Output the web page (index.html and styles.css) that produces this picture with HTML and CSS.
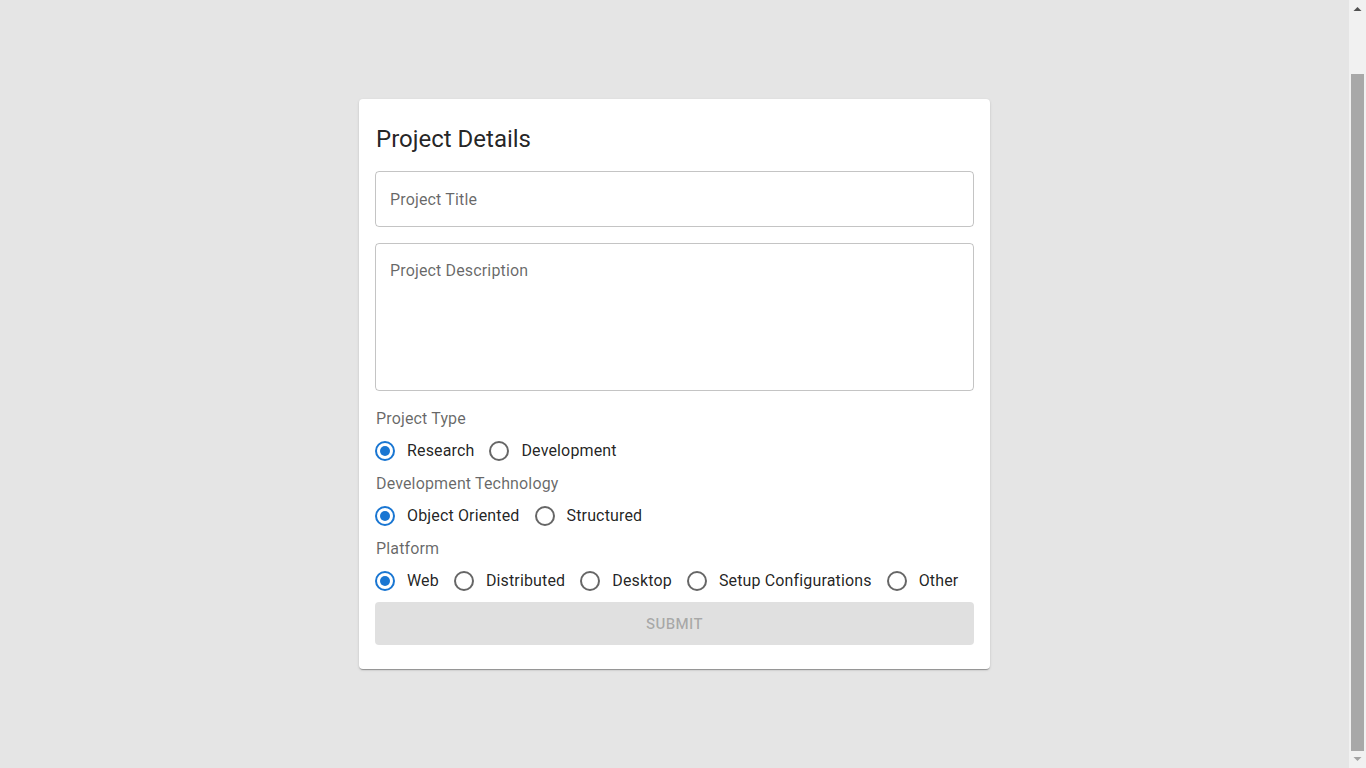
FILE: index.html
```html
<!DOCTYPE html>
<html lang="en">
<head>
<meta charset="utf-8">
<title>Project Details</title>
<link rel="stylesheet" href="styles.css">
</head>
<body>
<main class="page">
  <form class="card">
    <h2 class="title">Project Details</h2>
    <div class="field field-single">
      <span class="field-label">Project Title</span>
    </div>
    <div class="field field-multi">
      <span class="field-label">Project Description</span>
    </div>

    <div class="group">
      <div class="group-label">Project Type</div>
      <div class="radio-row">
        <label class="radio-item"><span class="radio checked"><svg viewBox="0 0 24 24"><circle cx="12" cy="12" r="9" class="ring"/><circle cx="12" cy="12" r="5" class="dot"/></svg></span><span class="radio-text">Research</span></label>
        <label class="radio-item"><span class="radio"><svg viewBox="0 0 24 24"><circle cx="12" cy="12" r="9" class="ring"/></svg></span><span class="radio-text">Development</span></label>
      </div>
    </div>

    <div class="group">
      <div class="group-label">Development Technology</div>
      <div class="radio-row">
        <label class="radio-item"><span class="radio checked"><svg viewBox="0 0 24 24"><circle cx="12" cy="12" r="9" class="ring"/><circle cx="12" cy="12" r="5" class="dot"/></svg></span><span class="radio-text">Object Oriented</span></label>
        <label class="radio-item"><span class="radio"><svg viewBox="0 0 24 24"><circle cx="12" cy="12" r="9" class="ring"/></svg></span><span class="radio-text">Structured</span></label>
      </div>
    </div>

    <div class="group">
      <div class="group-label">Platform</div>
      <div class="radio-row">
        <label class="radio-item"><span class="radio checked"><svg viewBox="0 0 24 24"><circle cx="12" cy="12" r="9" class="ring"/><circle cx="12" cy="12" r="5" class="dot"/></svg></span><span class="radio-text">Web</span></label>
        <label class="radio-item"><span class="radio"><svg viewBox="0 0 24 24"><circle cx="12" cy="12" r="9" class="ring"/></svg></span><span class="radio-text">Distributed</span></label>
        <label class="radio-item"><span class="radio"><svg viewBox="0 0 24 24"><circle cx="12" cy="12" r="9" class="ring"/></svg></span><span class="radio-text">Desktop</span></label>
        <label class="radio-item"><span class="radio"><svg viewBox="0 0 24 24"><circle cx="12" cy="12" r="9" class="ring"/></svg></span><span class="radio-text">Setup Configurations</span></label>
        <label class="radio-item"><span class="radio"><svg viewBox="0 0 24 24"><circle cx="12" cy="12" r="9" class="ring"/></svg></span><span class="radio-text">Other</span></label>
      </div>
    </div>

    <div class="submit">SUBMIT</div>
  </form>
</main>
<aside class="scrollbar" aria-hidden="true">
  <div class="sb-button"><svg viewBox="0 0 17 17"><polygon points="4.5,11 12.5,11 8.5,7" class="sb-arrow-up"/></svg></div>
  <div class="sb-track"><div class="sb-thumb"></div></div>
  <div class="sb-button"><svg viewBox="0 0 17 17"><polygon points="4.5,6 12.5,6 8.5,10" class="sb-arrow-down"/></svg></div>
</aside>
</body>
</html>
```

FILE: styles.css
```css
html, body {
  margin: 0;
  padding: 0;
}
body {
  background: #e5e5e5;
  font-family: Roboto, "Liberation Sans", Arial, sans-serif;
  color: rgba(0, 0, 0, 0.87);
  display: flex;
  height: 100vh;
  overflow: hidden;
}
.page {
  flex: 1;
  padding: 99px 0 0;
}
.card {
  width: 631px;
  box-sizing: border-box;
  margin: 0 auto;
  background: #fff;
  border-radius: 4px;
  box-shadow: 0px 2px 1px -1px rgba(0,0,0,0.2), 0px 1px 1px 0px rgba(0,0,0,0.14), 0px 1px 3px 0px rgba(0,0,0,0.12);
  padding: 24px 16px 24px;
  display: flex;
  flex-direction: column;
}
.title {
  margin: 0 0 16px;
  padding-left: 1px;
  font-size: 24px;
  font-weight: 400;
  line-height: 32px;
  color: rgba(0, 0, 0, 0.87);
}
.field {
  box-sizing: border-box;
  border: 1px solid rgba(0, 0, 0, 0.23);
  border-radius: 4px;
  padding: 0 14px;
  display: flex;
}
.field-single {
  height: 56px;
  align-items: center;
  margin-bottom: 16px;
}
.field-multi {
  height: 148px;
  align-items: flex-start;
  padding-top: 15px;
  margin-bottom: 16px;
}
.field-label {
  font-size: 16px;
  line-height: 23px;
  color: rgba(0, 0, 0, 0.6);
  letter-spacing: 0.00938em;
}
.group {
  display: flex;
  flex-direction: column;
}
.group-label {
  padding-left: 1px;
  font-size: 16px;
  line-height: 23px;
  color: rgba(0, 0, 0, 0.6);
  letter-spacing: 0.00938em;
}
.radio-row {
  display: flex;
  flex-wrap: wrap;
}
.radio-item {
  display: inline-flex;
  align-items: center;
  margin: 0 15px 0 -11px;
}
.radio {
  display: inline-flex;
  padding: 9px;
}
.radio svg {
  width: 24px;
  height: 24px;
  display: block;
}
.radio .ring {
  fill: none;
  stroke: rgba(0, 0, 0, 0.6);
  stroke-width: 2;
}
.radio.checked .ring {
  stroke: #1976d2;
}
.radio .dot {
  fill: #1976d2;
}
.radio-text {
  margin-left: 1px;
  font-size: 16px;
  line-height: 24px;
  letter-spacing: 0.00938em;
  color: rgba(0, 0, 0, 0.87);
}
.submit {
  height: 43px;
  border-radius: 4px;
  background: rgba(0, 0, 0, 0.12);
  color: rgba(0, 0, 0, 0.26);
  font-size: 15px;
  font-weight: 500;
  letter-spacing: 0.02857em;
  display: flex;
  align-items: center;
  justify-content: center;
}

/* emulated browser scrollbar */
.scrollbar {
  width: 17px;
  flex: 0 0 17px;
  height: 100vh;
  background: #f1f1f1;
  display: flex;
  flex-direction: column;
}
.sb-button {
  height: 17px;
  flex: 0 0 17px;
}
.sb-button svg {
  width: 17px;
  height: 17px;
  display: block;
}
.sb-arrow-up {
  fill: #505050;
}
.sb-arrow-down {
  fill: #a3a3a3;
}
.sb-track {
  flex: 1;
  display: flex;
  flex-direction: column;
  padding: 57px 2px 0;
}
.sb-thumb {
  flex: 1;
  background: #a8a8a8;
}
```
